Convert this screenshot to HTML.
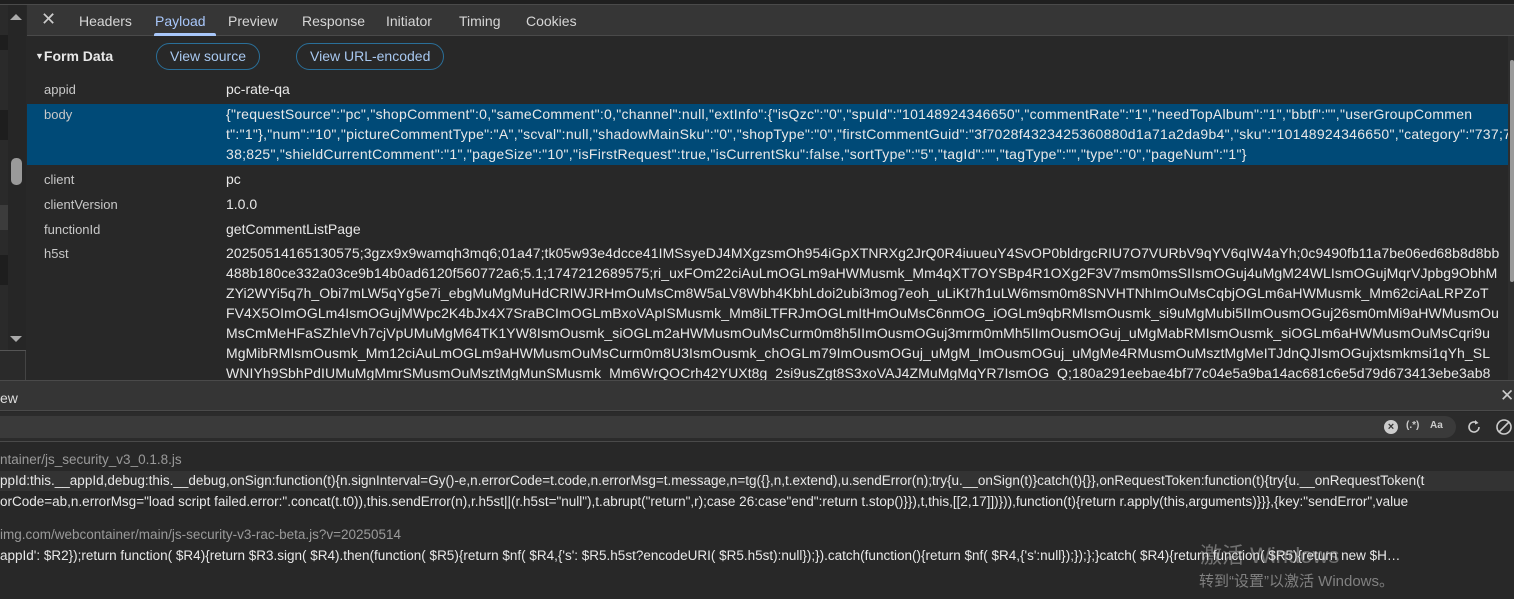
<!DOCTYPE html>
<html><head><meta charset="utf-8"><style>
*{margin:0;padding:0;box-sizing:border-box}
body{width:1514px;height:599px;background:#282828;overflow:hidden;font-family:"Liberation Sans","Noto Sans CJK SC",sans-serif;color:#e3e3e3;position:relative;font-size:13.5px}
.abs{position:absolute}
#top{left:0;top:0;width:1514px;height:5px;background:#1f1f1f;border-bottom:1px solid #4a4a4a}
#left{left:0;top:5px;width:26px;height:375px;background:#2a2a2a;border-right:1px solid #444}
#tabs{left:27px;top:5px;width:1487px;height:31px;background:#363636;border-bottom:1px solid #4a4a4a}
.tab{position:absolute;top:8px;font-size:14px;color:#d6d6d6}
#content{left:27px;top:36px;width:1481px;height:344px;overflow:hidden}
.k{position:absolute;left:17px;color:#c8c8c8;font-size:13px}
.v{position:absolute;left:199px;color:#e8e8e8;font-size:14px;line-height:20px;white-space:nowrap}
.btn{position:absolute;top:7px;height:27px;border:1px solid #2a6f99;border-radius:14px;color:#a8c8f0;font-size:14px;line-height:25px;padding:0 13px}
</style></head><body>
<div id="top" class="abs"></div>
<div id="left" class="abs">
 <div class="abs" style="left:0;top:30px;width:8px;height:15px;background:#1e1e1e"></div>
 <div class="abs" style="left:0;top:105px;width:8px;height:30px;background:#1e1e1e"></div>
 <div class="abs" style="left:0;top:200px;width:8px;height:25px;background:#3c3c3c"></div>
 <div class="abs" style="left:0;top:250px;width:8px;height:30px;background:#1e1e1e"></div>
 <div class="abs" style="left:8px;top:0;width:18px;height:345px;background:#262626"></div>
 <div class="abs" style="left:10px;top:9px;width:0;height:0;border-left:6px solid transparent;border-right:6px solid transparent;border-bottom:6px solid #aaa"></div>
 <div class="abs" style="left:11px;top:153px;width:11px;height:27px;background:#9a9a9a;border-radius:5px"></div>
 <div class="abs" style="left:10px;top:331px;width:0;height:0;border-left:6px solid transparent;border-right:6px solid transparent;border-top:6px solid #aaa"></div>
 <div class="abs" style="left:0;top:345px;width:26px;height:1px;background:#555"></div>
</div>
<div id="tabs" class="abs">
 <div class="tab" style="left:14px;font-size:18px;top:4px;color:#ccc">✕</div>
 <div class="tab" style="left:52px">Headers</div>
 <div class="tab" style="left:128px;color:#a8c7fa">Payload</div>
 <div class="abs" style="left:127px;top:28px;width:62px;height:3px;background:#a8c7fa;border-radius:2px 2px 0 0"></div>
 <div class="tab" style="left:201px">Preview</div>
 <div class="tab" style="left:275px">Response</div>
 <div class="tab" style="left:359px">Initiator</div>
 <div class="tab" style="left:432px">Timing</div>
 <div class="tab" style="left:499px">Cookies</div>
</div>
<div id="content" class="abs">
 <div class="abs" style="left:8px;top:12px;font-weight:bold;font-size:14px;color:#e8e8e8"><span style="font-size:9px;position:relative;top:-2px">▼</span>Form Data</div>
 <div class="btn" style="left:129px">View source</div>
 <div class="btn" style="left:269px">View URL-encoded</div>
 <div class="k" style="top:46px">appid</div><div class="v" style="top:43px">pc-rate-qa</div>
 <div class="abs" style="left:0;top:68px;width:1481px;height:61px;background:#004a77"></div>
 <div class="k" style="top:71px">body</div>
 <div class="v" style="top:68px;letter-spacing:0.28px">{"requestSource":"pc","shopComment":0,"sameComment":0,"channel":null,"extInfo":{"isQzc":"0","spuId":"10148924346650","commentRate":"1","needTopAlbum":"1","bbtf":"","userGroupCommen<br>t":"1"},"num":"10","pictureCommentType":"A","scval":null,"shadowMainSku":"0","shopType":"0","firstCommentGuid":"3f7028f4323425360880d1a71a2da9b4","sku":"10148924346650","category":"737;7<br>38;825","shieldCurrentComment":"1","pageSize":"10","isFirstRequest":true,"isCurrentSku":false,"sortType":"5","tagId":"","tagType":"","type":"0","pageNum":"1"}</div>
 <div class="k" style="top:136px">client</div><div class="v" style="top:133px">pc</div>
 <div class="k" style="top:161px">clientVersion</div><div class="v" style="top:158px">1.0.0</div>
 <div class="k" style="top:186px">functionId</div><div class="v" style="top:183px">getCommentListPage</div>
 <div class="k" style="top:210px">h5st</div>
 <div class="v" style="top:207px;letter-spacing:0.08px">20250514165130575;3gzx9x9wamqh3mq6;01a47;tk05w93e4dcce41IMSsyeDJ4MXgzsmOh954iGpXTNRXg2JrQ0R4iuueuY4SvOP0bldrgcRIU7O7VURbV9qYV6qIW4aYh;0c9490fb11a7be06ed68b8d8bb<br>488b180ce332a03ce9b14b0ad6120f560772a6;5.1;1747212689575;ri_uxFOm22ciAuLmOGLm9aHWMusmk_Mm4qXT7OYSBp4R1OXg2F3V7msm0msSIIsmOGuj4uMgM24WLIsmOGujMqrVJpbg9ObhM<br>ZYi2WYi5q7h_Obi7mLW5qYg5e7i_ebgMuMgMuHdCRIWJRHmOuMsCm8W5aLV8Wbh4KbhLdoi2ubi3mog7eoh_uLiKt7h1uLW6msm0m8SNVHTNhImOuMsCqbjOGLm6aHWMusmk_Mm62ciAaLRPZoT<br>FV4X5OImOGLm4IsmOGujMWpc2K4bJx4X7SraBCImOGLmBxoVApISMusmk_Mm8iLTFRJmOGLmItHmOuMsC6nmOG_iOGLm9qbRMIsmOusmk_si9uMgMubi5IImOusmOGuj26sm0mMi9aHWMusmOu<br>MsCmMeHFaSZhIeVh7cjVpUMuMgM64TK1YW8IsmOusmk_siOGLm2aHWMusmOuMsCurm0m8h5IImOusmOGuj3mrm0mMh5IImOusmOGuj_uMgMabRMIsmOusmk_siOGLm6aHWMusmOuMsCqri9u<br>MgMibRMIsmOusmk_Mm12ciAuLmOGLm9aHWMusmOuMsCurm0m8U3IsmOusmk_chOGLm79ImOusmOGuj_uMgM_ImOusmOGuj_uMgMe4RMusmOuMsztMgMeITJdnQJIsmOGujxtsmkmsi1qYh_SL<br>WNIYh9SbhPdIUMuMgMmrSMusmOuMsztMgMunSMusmk_Mm6WrQOCrh42YUXt8g_2si9usZgt8S3xoVAJ4ZMuMgMqYR7IsmOG_Q;180a291eebae4bf77c04e5a9ba14ac681c6e5d79d673413ebe3ab8</div>
</div>
<div class="abs" style="left:1508px;top:36px;width:6px;height:344px;background:#2e2e2e"></div>
<div class="abs" style="left:1510px;top:60px;width:4px;height:222px;background:#9a9a9a;border-radius:2px"></div>
<div class="abs" style="left:0;top:380px;width:1514px;height:1px;background:#4a4a4a"></div>
<div class="abs" style="left:0;top:381px;width:1514px;height:30px;background:#353535;border-bottom:1px solid #4a4a4a"></div>
<div class="abs" style="left:0;top:390px;font-size:14px;color:#ddd">ew</div>
<div class="abs" style="left:1500px;top:386px;font-size:17px;color:#ccc">✕</div>
<div class="abs" style="left:0;top:412px;width:1514px;height:30px;background:#2b2b2b;border-bottom:1px solid #4a4a4a"></div>
<div class="abs" style="left:0;top:416px;width:1456px;height:22px;background:#3a3a3a;border-radius:0 11px 11px 0"></div>
<div class="abs" style="left:1384px;top:420px;width:14px;height:14px;border-radius:50%;background:#ccc;color:#333;font-size:11px;line-height:14px;text-align:center;font-weight:bold">×</div>
<div class="abs" style="left:1406px;top:420px;font-size:10px;color:#ccc;font-weight:bold">(.*)</div>
<div class="abs" style="left:1430px;top:420px;font-size:10px;color:#ccc;font-weight:bold">Aa</div>
<svg class="abs" style="left:1465px;top:418px" width="18" height="18" viewBox="0 0 18 18"><path d="M14 9a5 5 0 1 1-2-4" fill="none" stroke="#ccc" stroke-width="1.6"/><path d="M10 2l3.5 3-3.5 1.5z" fill="#ccc"/></svg>
<svg class="abs" style="left:1495px;top:418px" width="19" height="18" viewBox="0 0 19 18"><circle cx="9" cy="9" r="7" fill="none" stroke="#ccc" stroke-width="1.6"/><path d="M4 14L14 4" stroke="#ccc" stroke-width="1.6"/></svg>
<div class="abs" style="left:0;top:452px;font-size:13.5px;color:#9a9a9a;white-space:nowrap">ntainer/js_security_v3_0.1.8.js</div>
<div class="abs" style="left:0;top:471px;width:1514px;height:20px;background:#333"></div>
<div class="abs" style="left:0;top:473px;font-size:13.5px;color:#e8e8e8;white-space:nowrap">ppId:this.__appId,debug:this.__debug,onSign:function(t){n.signInterval=Gy()-e,n.errorCode=t.code,n.errorMsg=t.message,n=tg({},n,t.extend),u.sendError(n);try{u.__onSign(t)}catch(t){}},onRequestToken:function(t){try{u.__onRequestToken(t</div>
<div class="abs" style="left:0;top:494px;font-size:13.5px;color:#e8e8e8;white-space:nowrap">orCode=ab,n.errorMsg="load script failed.error:".concat(t.t0)),this.sendError(n),r.h5st||(r.h5st="null"),t.abrupt("return",r);case 26:case"end":return t.stop()}}),t,this,[[2,17]])})),function(t){return r.apply(this,arguments)}}},{key:"sendError",value</div>
<div class="abs" style="left:0;top:527px;font-size:13.5px;color:#9a9a9a;white-space:nowrap">img.com/webcontainer/main/js-security-v3-rac-beta.js?v=20250514</div>
<div class="abs" style="left:0;top:548px;font-size:13.5px;color:#e8e8e8;white-space:nowrap">appId': $R2});return function( $R4){return  $R3.sign( $R4).then(function( $R5){return  $nf( $R4,{'s': $R5.h5st?encodeURI( $R5.h5st):null});}).catch(function(){return  $nf( $R4,{'s':null});});};}catch( $R4){return function( $R5){return new  $H…</div>
<div class="abs" style="left:1200px;top:538px;font-size:22px;color:rgba(200,200,200,0.45)">激活 Windows</div>
<div class="abs" style="left:1199px;top:570px;font-size:15px;color:rgba(200,200,200,0.55)">转到“设置”以激活 Windows。</div>
</body></html>
